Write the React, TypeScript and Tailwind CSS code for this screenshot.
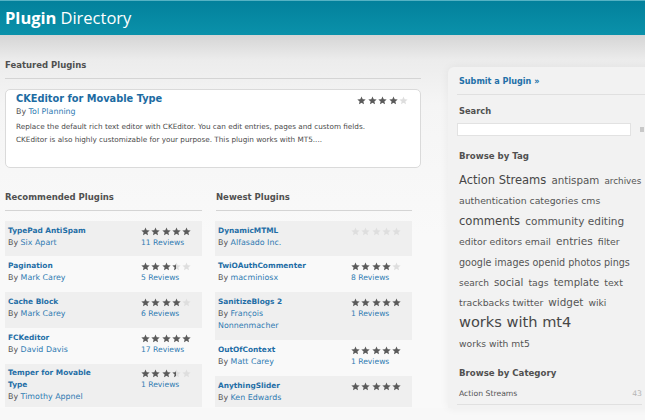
import React from "react";

const STAR = "5,0.5 6.3,3.6 9.6,3.85 7.05,6.0 7.85,9.3 5,7.5 2.15,9.3 2.95,6.0 0.4,3.85 3.7,3.6";

function Star({ fill, size }: { fill: number; size: number }) {
  return (
    <span className="relative inline-block shrink-0" style={{ width: size, height: size }}>
      <svg className="absolute left-0 top-0" width={size} height={size} viewBox="0 0 10 10">
        <polygon points={STAR} fill="#dedede" />
      </svg>
      <span className="absolute left-0 top-0 h-full overflow-hidden" style={{ width: fill * size }}>
        <svg width={size} height={size} viewBox="0 0 10 10">
          <polygon points={STAR} fill="#5a5a5a" />
        </svg>
      </span>
    </span>
  );
}

function Stars({ value, size = 9, gap = "gap-[1.3px]" }: { value: number; size?: number; gap?: string }) {
  return (
    <div className={`flex items-center ${gap}`}>
      {[0, 1, 2, 3, 4].map((i) => (
        <Star key={i} size={size} fill={Math.max(0, Math.min(1, value - i))} />
      ))}
    </div>
  );
}

type Plugin = {
  name: React.ReactNode;
  author: React.ReactNode;
  rating: number;
  reviews?: string;
  gray: boolean;
  pad: string;
};

function Row({ p }: { p: Plugin }) {
  return (
    <div className={`flex pl-[3px] ${p.pad} ${p.gray ? "bg-[#efefef]" : ""}`}>
      <div className="flex-1 leading-[12px]">
        <div className="text-[7.4px] font-bold text-[#1f6ea6]">{p.name}</div>
        <div className="text-[7.9px] text-[#555]">
          By <span className="text-[#2f7bb2]">{p.author}</span>
        </div>
      </div>
      <div className="w-[61px] leading-[12px]">
        <div className="flex h-[12px] items-center">
          <Stars value={p.rating} />
        </div>
        {p.reviews && <div className="text-[7.6px] text-[#2f7bb2]">{p.reviews}</div>}
      </div>
    </div>
  );
}

const recommended: Plugin[] = [
  { name: "TypePad AntiSpam", author: "Six Apart", rating: 5, reviews: "11 Reviews", gray: true, pad: "pt-[4px] pb-[7px]" },
  { name: "Pagination", author: "Mark Carey", rating: 3.5, reviews: "5 Reviews", gray: false, pad: "pt-[4px] pb-[8px]" },
  { name: "Cache Block", author: "Mark Carey", rating: 4, reviews: "6 Reviews", gray: true, pad: "pt-[4px] pb-[8px]" },
  { name: "FCKeditor", author: "David Davis", rating: 5, reviews: "17 Reviews", gray: false, pad: "pt-[4px] pb-[8px]" },
  {
    name: (
      <>
        Temper for Movable
        <br />
        Type
      </>
    ),
    author: "Timothy Appnel",
    rating: 3.5,
    reviews: "1 Reviews",
    gray: true,
    pad: "pt-[3px] pb-[4px]",
  },
];

const newest: Plugin[] = [
  { name: "DynamicMTML", author: "Alfasado Inc.", rating: 0, gray: true, pad: "pt-[4px] pb-[7px]" },
  { name: "TwiOAuthCommenter", author: "macminiosx", rating: 4, reviews: "8 Reviews", gray: false, pad: "pt-[4px] pb-[8px]" },
  {
    name: "SanitizeBlogs 2",
    author: (
      <>
        François
        <br />
        Nonnenmacher
      </>
    ),
    rating: 5,
    reviews: "1 Reviews",
    gray: true,
    pad: "pt-[4px] pb-[8px]",
  },
  { name: "OutOfContext", author: "Matt Carey", rating: 5, reviews: "1 Reviews", gray: false, pad: "pt-[4px] pb-[8px]" },
  { name: "AnythingSlider", author: "Ken Edwards", rating: 5, gray: true, pad: "pt-[4px] pb-[3px]" },
];

function Heading({ children }: { children: React.ReactNode }) {
  return (
    <div className="border-b border-[#d4d4d4] pb-[7px] text-[8.5px] font-bold leading-[12px] text-[#505050]">
      {children}
    </div>
  );
}

function TagLine({ children }: { children: React.ReactNode }) {
  return <div className="h-[20.4px] whitespace-nowrap leading-[20.4px] text-[#555]">{children}</div>;
}

export default function App() {
  return (
    <div className="h-[420px] w-[645px] overflow-hidden bg-[#f8f8f8] font-['DejaVu_Sans',sans-serif]">
      <div className="flex h-[35px] items-center border-t border-[#55b2c4] bg-[linear-gradient(to_bottom,#03819c,#0a91aa)] pl-[5px] font-['Open_Sans',sans-serif] text-[16.5px] text-white">
        <span className="font-bold">Plugin</span>
        <span className="ml-[4px]">Directory</span>
      </div>
      <div className="flex bg-[linear-gradient(to_bottom,#d5d5d5,#ececec_25px,#f5f5f5_70px,#f9f9f9_200px)] pt-[24px]">
        {/* main column */}
        <div className="ml-[5px] w-[416px] shrink-0">
          <Heading>Featured Plugins</Heading>
          <div className="relative mt-[10px] h-[79px] rounded-[5px] border border-[#dadada] bg-white pl-[10px] pt-[2px]">
            <div className="text-[9.8px] font-bold leading-[14px] text-[#1c6ba2]">CKEditor for Movable Type</div>
            <div className="text-[7.9px] leading-[12px] text-[#555]">
              By <span className="text-[#2f7bb2]">Tol Planning</span>
            </div>
            <div className="mt-[3px] text-[7.25px] leading-[12.5px] text-[#4a4a4a]">
              Replace the default rich text editor with CKEditor. You can edit entries, pages and custom fields.
              <br />
              CKEditor is also highly customizable for your purpose. This plugin works with MT5....
            </div>
            <div className="absolute right-[12px] top-[6px]">
              <Stars value={4} size={9} gap="gap-[1.5px]" />
            </div>
          </div>

          <div className="mt-[23px] flex gap-[13px]">
            <div className="w-[197px]">
              <Heading>Recommended Plugins</Heading>
              <div className="mt-[10px]">
                {recommended.map((p, i) => (
                  <Row key={i} p={p} />
                ))}
              </div>
            </div>
            <div className="w-[197px]">
              <div className="pl-[1px]">
                <Heading>Newest Plugins</Heading>
              </div>
              <div className="mt-[10px]">
                {newest.map((p, i) => (
                  <Row key={i} p={p} />
                ))}
              </div>
            </div>
          </div>
        </div>

        {/* sidebar */}
        <div className="ml-[27px] mt-[8px] w-[220px] shrink-0 rounded-tl-[6px] bg-[#f2f2f2] pb-[3px] pl-[9px] pt-[8px] shadow-[0_0_10px_rgba(0,0,0,0.06)]">
          <div className="border-b border-[#e0e0e0] pb-[7px] pl-[2px] text-[8.1px] font-bold leading-[12px] text-[#2370a8]">
            Submit a Plugin »
          </div>
          <div className="mt-[10px] pl-[2px] text-[8.3px] font-bold leading-[12px] text-[#505050]">Search</div>
          <div className="mt-[6px] flex items-center">
            <div className="h-[13px] w-[174px] border border-[#e2e2e2] bg-white" />
            <div className="ml-[9px] h-[5px] w-[4px] bg-[#c8c8c8]" />
          </div>
          <div className="mt-[14px] pl-[2px] text-[8.6px] font-bold leading-[12px] text-[#505050]">Browse by Tag</div>
          <div className="mt-[7px] pl-[2px]">
            <TagLine>
              <span className="text-[11.5px] text-[#474747]">Action Streams</span>{" "}
              <span className="text-[10.3px]">antispam</span> <span className="text-[8.8px]">archives</span>
            </TagLine>
            <TagLine>
              <span className="text-[9.3px]">authentication categories cms</span>
            </TagLine>
            <TagLine>
              <span className="text-[11.6px] text-[#474747]">comments</span>{" "}
              <span className="text-[10.5px]">community editing</span>
            </TagLine>
            <TagLine>
              <span className="text-[9.4px]">editor editors email</span>{" "}
              <span className="text-[10.6px]">entries</span> <span className="text-[9.4px]">filter</span>
            </TagLine>
            <TagLine>
              <span className="text-[9.6px]">google images openid photos pings</span>
            </TagLine>
            <TagLine>
              <span className="text-[9px]">search</span> <span className="text-[10.3px]">social</span>{" "}
              <span className="text-[9.3px]">tags</span> <span className="text-[10.1px]">template</span>{" "}
              <span className="text-[9.4px]">text</span>
            </TagLine>
            <TagLine>
              <span className="text-[9.3px]">trackbacks twitter</span>{" "}
              <span className="text-[10.4px]">widget</span> <span className="text-[9.2px]">wiki</span>
            </TagLine>
            <TagLine>
              <span className="text-[14.6px] text-[#474747]">works with mt4</span>
            </TagLine>
            <TagLine>
              <span className="text-[9.2px]">works with mt5</span>
            </TagLine>
          </div>
          <div className="mt-[14px] pl-[2px] text-[8.6px] font-bold leading-[12px] text-[#505050]">Browse by Category</div>
          <div className="mt-[9px] flex w-[185px] border-b border-[#e0e0e0] pb-[4px] pl-[2px] text-[7.7px] leading-[12px] text-[#555]">
            <span>Action Streams</span>
            <span className="ml-auto text-[#b5b5b5]">43</span>
          </div>
        </div>
      </div>
    </div>
  );
}
